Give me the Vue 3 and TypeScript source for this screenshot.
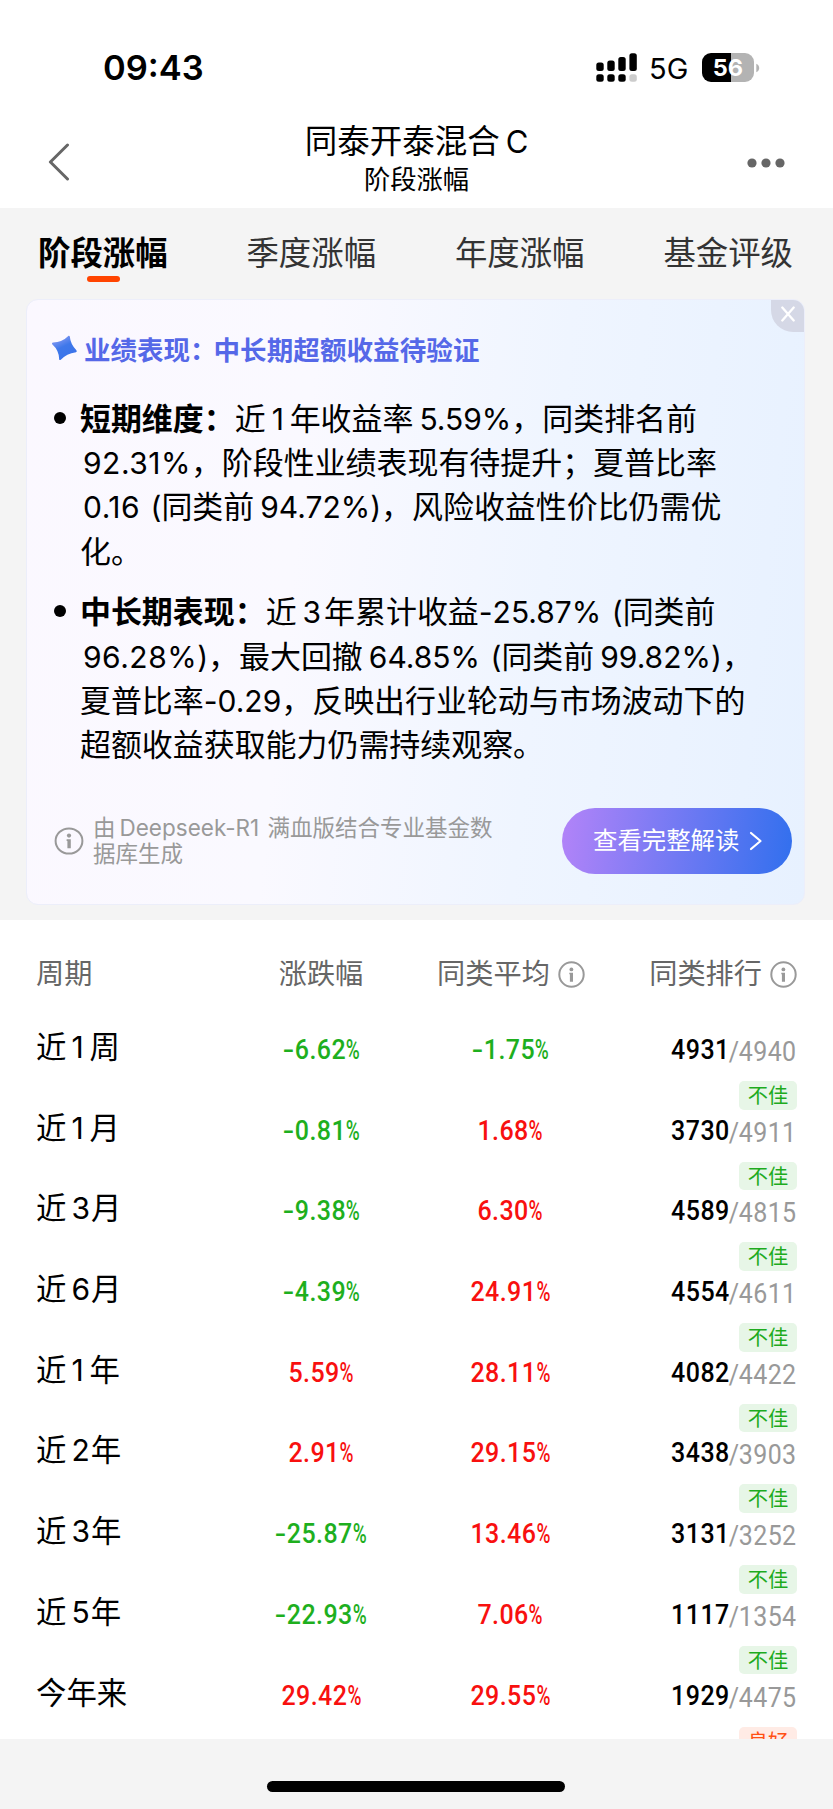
<script setup lang="ts">
interface Row { label: string; change: string; average: string; rank: string; total: string; tag: string }

const tabs: string[] = ['阶段涨幅', '季度涨幅', '年度涨幅', '基金评级']

const points: { title: string; lines: string[] }[] = [
  {
    title: '短期维度：',
    lines: ['近1年收益率5.59%，同类排名前', '92.31%，阶段性业绩表现有待提升；夏普比率', '0.16 (同类前94.72%)，风险收益性价比仍需优', '化。'],
  },
  {
    title: '中长期表现：',
    lines: ['近3年累计收益-25.87% (同类前', '96.28%)，最大回撤64.85% (同类前99.82%)，', '夏普比率-0.29，反映出行业轮动与市场波动下的', '超额收益获取能力仍需持续观察。'],
  },
]

const rows: Row[] = [
  { label: '近1周', change: '-6.62', average: '-1.75', rank: '4931', total: '4940', tag: '不佳' },
  { label: '近1月', change: '-0.81', average: '1.68', rank: '3730', total: '4911', tag: '不佳' },
  { label: '近3月', change: '-9.38', average: '6.30', rank: '4589', total: '4815', tag: '不佳' },
  { label: '近6月', change: '-4.39', average: '24.91', rank: '4554', total: '4611', tag: '不佳' },
  { label: '近1年', change: '5.59', average: '28.11', rank: '4082', total: '4422', tag: '不佳' },
  { label: '近2年', change: '2.91', average: '29.15', rank: '3438', total: '3903', tag: '不佳' },
  { label: '近3年', change: '-25.87', average: '13.46', rank: '3131', total: '3252', tag: '不佳' },
  { label: '近5年', change: '-22.93', average: '7.06', rank: '1117', total: '1354', tag: '不佳' },
  { label: '今年来', change: '29.42', average: '29.55', rank: '1929', total: '4475', tag: '良好' },
]

// Splits mixed text into runs, so that numerals get a small gap beside Chinese characters.
function runs(text: string): { text: string; kind: string }[] {
  return (text.match(/[\d.%]+|[()\- ]+|[^\d.%()\- ]+/g) ?? []).map((t) => {
    if (/^[\d.%]/.test(t)) return { text: t, kind: 'num' }
    if (/^ /.test(t)) return { text: t, kind: 'sym open' }
    if (/^[()-]/.test(t)) return { text: t, kind: 'sym' }
    return { text: t, kind: t.startsWith('，') ? 'punct' : 'han' }
  })
}

const tone = (value: string): string => (value.startsWith('-') ? 'down' : 'up')
</script>

<template>
  <div class="screen">
    <header class="top">
      <div class="status">
        <span class="time">09:43</span>
        <div class="status-right">
          <svg class="signal" width="42" height="30" viewBox="0 0 42 30">
            <rect x="0.3" y="9.5" width="7.4" height="8.5" rx="2.5" />
            <rect x="11.3" y="7.5" width="7.4" height="10.5" rx="2.5" />
            <rect x="22.3" y="4" width="7.4" height="14" rx="2.5" />
            <rect x="33.4" y="0.2" width="7.4" height="17.8" rx="2.5" />
            <rect x="0.3" y="21.2" width="7.4" height="7.6" rx="2.5" />
            <rect x="11.3" y="21.2" width="7.4" height="7.6" rx="2.5" />
            <rect x="22.3" y="21.2" width="7.4" height="7.6" rx="2.5" />
            <rect x="33.4" y="21.2" width="7.4" height="7.6" rx="2.5" fill="#ccc" />
          </svg>
          <span class="net">5G</span>
          <div class="battery">56</div>
          <svg class="tip" width="4" height="10" viewBox="0 0 4 10"><path d="M0.3 0.8C4.2 2.5 4.2 7.5 0.3 9.2Z" fill="#b3b3b3" /></svg>
        </div>
      </div>
      <div class="nav">
        <svg class="back" width="24" height="38" viewBox="0 0 24 38"><path d="M20.5 2L3.4 19L20.5 36" fill="none" stroke="#666" stroke-width="3" stroke-linecap="round" stroke-linejoin="round" /></svg>
        <div class="titles">
          <div class="title">同泰开泰混合<span>C</span></div>
          <div class="subtitle">阶段涨幅</div>
        </div>
        <svg class="more" width="38" height="10" viewBox="0 0 38 10" fill="#666"><circle cx="5" cy="5" r="4.6" /><circle cx="19" cy="5" r="4.6" /><circle cx="33" cy="5" r="4.6" /></svg>
      </div>
    </header>

    <nav class="tabs">
      <div v-for="(tab, i) in tabs" :key="tab" class="tab" :class="{ active: i === 0 }">{{ tab }}</div>
    </nav>

    <section class="card">
      <div class="close">
        <svg width="14" height="16" viewBox="0 0 14 16"><path d="M1.3 1.5L12.7 14.5M12.7 1.5L1.3 14.5" stroke="#fff" stroke-width="2.3" stroke-linecap="round" /></svg>
      </div>
      <div class="card-title">
        <svg width="27" height="26" viewBox="0 0 27 26">
          <defs><linearGradient id="star" x1="0.1" y1="0" x2="0.6" y2="1"><stop offset="0" stop-color="#9aa3f5" /><stop offset="0.5" stop-color="#3f78ea" /><stop offset="1" stop-color="#3a72ea" /></linearGradient></defs>
          <path d="M17.6 0.8Q18.6 0.6 18.8 1.6Q19.5 9.5 25.4 15.2Q26.4 16.6 25 17.2Q15.5 18.5 9.8 24.8Q8.6 25.6 8.2 24.4Q8.2 15.5 1.2 9.2Q0.4 8 1.8 7.5Q10.8 7.6 17.6 0.8Z" fill="url(#star)" />
        </svg>
        <div class="headline"><span>业绩表现：</span><span>中长期超额收益待验证</span></div>
      </div>
      <ul class="points">
        <li v-for="p in points" :key="p.title">
          <div v-for="(line, i) in p.lines" :key="i" class="line"><b v-if="i === 0">{{ p.title }}</b><span v-for="(r, j) in runs(line)" :key="j" :class="r.kind">{{ r.text }}</span></div>
        </li>
      </ul>
      <footer class="card-foot">
        <svg class="info" width="30" height="28" viewBox="0 0 30 28"><ellipse cx="15" cy="14" rx="13.4" ry="12.6" fill="none" stroke="#999" stroke-width="2" /><circle cx="15" cy="8.6" r="2.1" fill="#999" /><path d="M12.6 12.2H16.8V21.2H13.4V14H12.6Z" fill="#999" /></svg>
        <div class="source"><div>由<span>Deepseek-R1</span> 满血版结合专业基金数</div><div>据库生成</div></div>
        <div class="cta">
          <span>查看完整解读</span>
          <svg width="14" height="20" viewBox="0 0 14 20"><path d="M2 2L11.5 10L2 18" fill="none" stroke="#fff" stroke-width="2.2" stroke-linecap="round" stroke-linejoin="round" /></svg>
        </div>
      </footer>
    </section>

    <section class="table">
      <div class="grid head">
        <div>周期</div>
        <div class="mid">涨跌幅</div>
        <div v-for="name in ['同类平均', '同类排行']" :key="name" class="with-info">
          <span>{{ name }}</span>
          <svg width="27" height="27" viewBox="0 0 27 27"><circle cx="13.5" cy="13.5" r="12.2" fill="none" stroke="#999" stroke-width="2" /><circle cx="13.4" cy="8.4" r="1.9" fill="#999" /><path d="M11.3 11.7H15V20.8H11.9V13.2H11.3Z" fill="#999" /></svg>
        </div>
      </div>
      <div v-for="row in rows" :key="row.label" class="grid row">
        <div class="label"><span v-for="(r, j) in runs(row.label)" :key="j" :class="r.kind">{{ r.text }}</span></div>
        <div v-for="(v, j) in [row.change, row.average]" :key="j" class="value" :class="tone(v)"><span class="din"><u v-if="v.startsWith('-')">-</u>{{ v.replace('-', '') }}<i>%</i></span></div>
        <div class="ranking">
          <div class="rank"><span class="din">{{ row.rank }}<em><s>/</s>{{ row.total }}</em></span></div>
          <div class="tag" :class="{ good: row.tag === '良好' }">{{ row.tag }}</div>
        </div>
      </div>
    </section>

    <div class="home"><div></div></div>
  </div>
</template>

<style>
body { margin: 0; background: #f4f4f4; }
</style>

<style scoped>
.screen { width: 833px; height: 1809px; overflow: hidden; display: flex; flex-direction: column; background: #f4f4f4; color: #000; font-family: Inter, "Noto Sans CJK SC", sans-serif; white-space: nowrap; }
.screen > * { flex: none; }
.top { height: 208px; background: #fff; }
.status { box-sizing: border-box; height: 108px; padding: 27px 73px 0 103px; display: flex; justify-content: space-between; align-items: center; }
.time { font-size: 34.5px; font-weight: 600; line-height: 40px; }
.status-right { display: flex; align-items: center; }
.net { margin-left: 11px; width: 39px; font-size: 29px; line-height: 30px; padding-top: 2px; }
.battery { margin-left: 14px; width: 52px; height: 29px; border-radius: 9px; background: linear-gradient(90deg, #000 56%, #b3b3b3 56%); color: #fff; font-size: 23.5px; font-weight: 700; line-height: 29px; text-align: center; }
.tip { margin-left: 2px; }
.nav { height: 100px; display: grid; grid-template-columns: 1fr auto 1fr; align-items: start; padding: 0 47px; }
.back { margin-top: 35px; }
.more { margin: 50px 1px 0 0; justify-self: end; }
.titles { text-align: center; }
.title { font-size: 32.5px; line-height: 38px; padding-top: 15px; }
.title span { margin-left: 6px; font-size: 31px; }
.subtitle { font-size: 26.3px; line-height: 36px; margin-top: 1px; }
.tabs { height: 90px; box-sizing: border-box; padding: 25px 40px 0 38px; display: flex; justify-content: space-between; }
.tab { font-size: 32.4px; line-height: 41px; color: #333; }
.active { font-weight: 700; color: #000; display: flex; flex-direction: column; align-items: center; }
.active::after { content: ""; width: 33px; height: 6px; margin: 2px 0 0 2px; border-radius: 3px; background: #ff4400; }
.card { position: relative; box-sizing: border-box; width: 779px; height: 606px; margin: 1px 28px 15px 26px; border: 1px solid #eceefa; border-radius: 12px; overflow: hidden; background: linear-gradient(96deg, #fbf8ff 0%, #faf9ff 35%, #eff5ff 65%, #e7f1ff 100%); }
.close { position: absolute; top: -1px; right: -1px; width: 34px; height: 33px; border-radius: 0 0 0 22px; background: #d5d8e6; display: flex; align-items: center; justify-content: center; }
.close svg { margin-bottom: 3px; }
.card-title { display: flex; align-items: center; height: 36px; margin: 30px 0 0 24px; gap: 6px; font-size: 26.5px; font-weight: 600; color: #5568e8; }
.headline { display: flex; }
.headline span:last-child { margin-left: -3px; letter-spacing: 0.1px; }
.points { margin: 30.5px 0 0; padding: 0; list-style: none; }
.points li { position: relative; padding-left: 53px; margin-bottom: 16.2px; }
.points li::before { content: ""; position: absolute; left: 27px; top: 15px; width: 12px; height: 12px; border-radius: 50%; background: #000; }
.line { height: 44.4px; line-height: 44.4px; font-size: 30.95px; display: flex; white-space: pre; }
.line b { font-weight: 700; }
.num { margin-left: 6px; font-size: 30px; min-width: 15px; }
.line .num:first-child { margin-left: 3px; letter-spacing: 0.5px; }
.num + .han { margin-left: 3px; }
.sym { font-size: 30px; }
.open { margin-left: 2px; }
.sym + .num { margin-left: 0; }
.card-foot { display: flex; align-items: center; margin-top: 40.5px; padding: 0 12px 0 27px; height: 66px; }
.source { flex: 1; margin-left: 9px; font-size: 22.5px; line-height: 26.6px; color: #999; white-space: pre; }
.source span { margin: 0 2px 0 4px; }
.cta { width: 230px; height: 66px; box-sizing: border-box; padding-left: 31px; border-radius: 33px; display: flex; align-items: center; color: #fff; font-size: 24.4px; line-height: 32px; background: linear-gradient(97deg, #b083f8 2%, #3470ee 98%); }
.cta span { padding-bottom: 2px; }
.cta svg { margin-left: 10px; }
.table { height: 819px; overflow: hidden; background: #fff; }
.grid { display: grid; grid-template-columns: 191px 188px 190px 192px; padding: 0 36px; }
.head { height: 109px; font-size: 28.2px; line-height: 109px; color: #666; }
.mid { text-align: center; }
.with-info { display: flex; justify-content: center; align-items: center; gap: 8px; height: 108px; padding-left: 2px; }
.with-info:last-child { justify-content: flex-end; }
.row { height: 80.7px; }
.label { display: flex; height: 37px; line-height: 37px; font-size: 30.4px; }
.label .num { margin: 0 0 0 5px; min-width: 17px; }
.label .num + .han { margin-left: 1px; }
.value { text-align: center; height: 42px; line-height: 42px; }
.din { display: inline-block; font-family: Roboto, sans-serif; font-size: 28.4px; font-weight: 500; letter-spacing: 0.5px; transform: scaleX(0.88); }
.din u { display: inline-block; text-decoration: none; transform: scaleX(1.35); transform-origin: right; margin-left: 3px; }
.din i { display: inline-block; font-style: normal; font-weight: 500; transform: scaleX(0.76); transform-origin: left; margin-right: -6px; }
.up { color: #f8100f; }
.down { color: #1eaf1e; }
.ranking { display: flex; flex-direction: column; align-items: flex-end; }
.rank { height: 52px; line-height: 42px; }
.rank .din { transform-origin: right; }
.rank em { display: inline-block; position: relative; top: 2px; margin-left: -1px; font-style: normal; font-weight: 400; color: #999; }
.rank s { text-decoration: none; letter-spacing: -0.5px; }
.tag { width: 58px; height: 28.5px; line-height: 29px; border-radius: 5px; background: #e7f6e7; color: #1eab1e; font-size: 20.3px; text-align: center; }
.good { background: #ffebe5; color: #ff5014; }
.home { height: 70px; display: flex; justify-content: center; }
.home div { width: 298px; height: 11px; margin: 42px 1px 0 0; border-radius: 6px; background: #000; }
</style>
